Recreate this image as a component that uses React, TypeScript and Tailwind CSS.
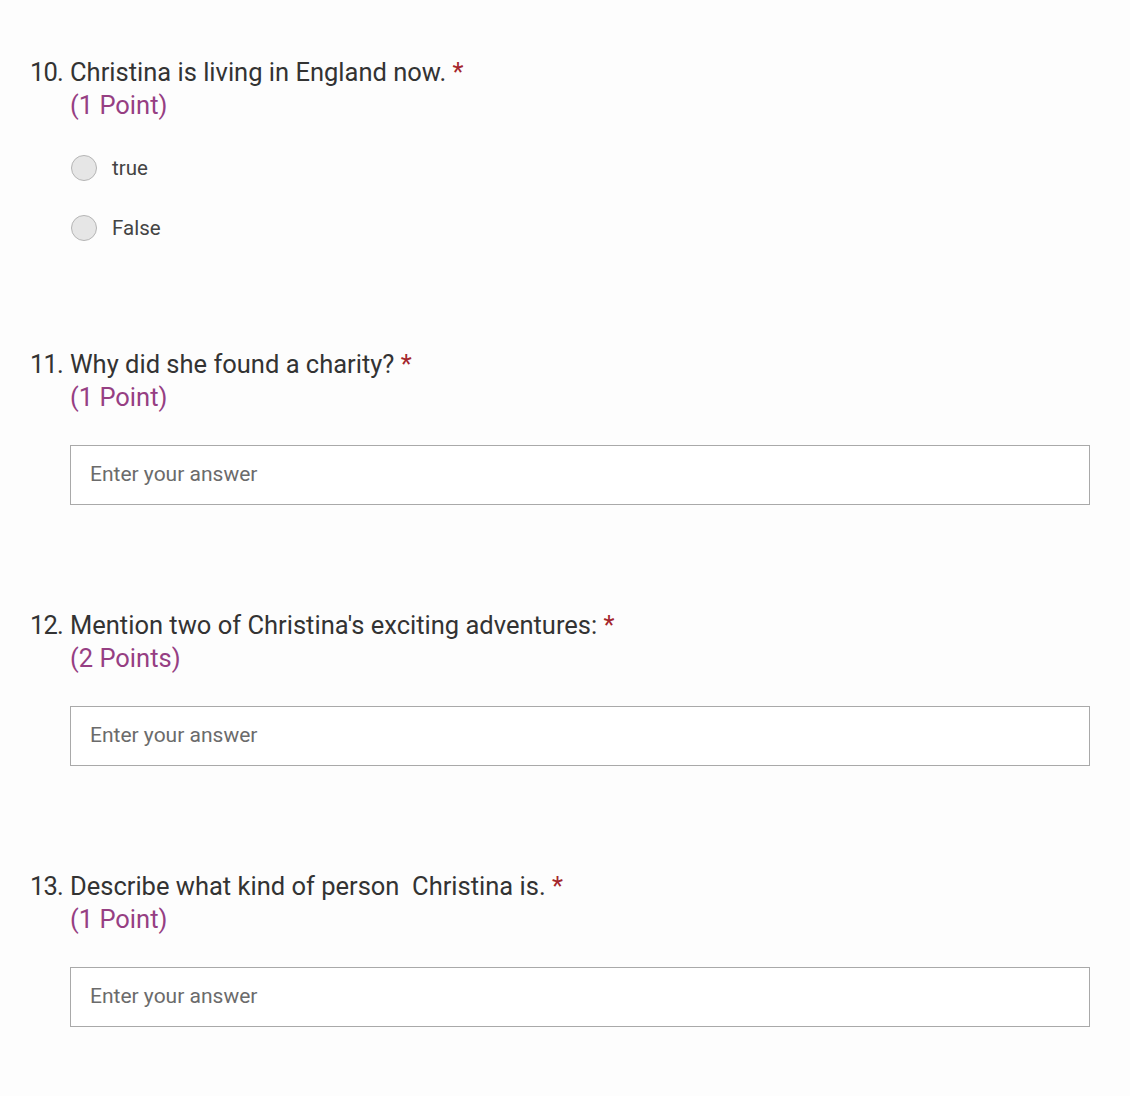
import React from "react";

type Question = {
  num: string;
  title: string;
  points: string;
  kind: "radio" | "text";
  options?: string[];
};

const questions: Question[] = [
  { num: "10.", title: "Christina is living in England now.", points: "(1 Point)", kind: "radio", options: ["true", "False"] },
  { num: "11.", title: "Why did she found a charity?", points: "(1 Point)", kind: "text" },
  { num: "12.", title: "Mention two of Christina's exciting adventures:", points: "(2 Points)", kind: "text" },
  { num: "13.", title: "Describe what kind of person\u00a0 Christina is.", points: "(1 Point)", kind: "text" },
];

function QuestionBlock({ q }: { q: Question }) {
  return (
    <div className="flex flex-col">
      <div className="flex text-[25.5px] leading-[32px] text-[#333333]">
        <span className="w-[40px] shrink-0 tracking-[-0.8px]">{q.num}</span>
        <span>
          {q.title} <span className="text-[#a4262c]">*</span>
        </span>
      </div>
      <div className="pl-[40px] text-[25.5px] leading-[34px] text-[#963f83]">{q.points}</div>
      {q.kind === "radio" ? (
        <div className="mt-[26px] flex flex-col gap-[20px] pl-[41px]">
          {q.options!.map((o) => (
            <label key={o} className="flex h-[40px] items-center gap-[15px]">
              <span className="h-[26px] w-[26px] rounded-full border border-[#b5b5b5] bg-[#e6e6e6]" />
              <span className="text-[20.5px] text-[#444444]">{o}</span>
            </label>
          ))}
        </div>
      ) : (
        <div className="mt-[31px] ml-[40px] mr-[10px] flex h-[60px] items-center border border-[#a9a9a9] bg-white px-[19px]">
          <span className="text-[21px] text-[#6b6b6b]">Enter your answer</span>
        </div>
      )}
    </div>
  );
}

export default function App() {
  return (
    <div
      className="min-h-[1096px] w-[1130px] bg-[#fdfdfd] px-[30px] pt-[56px]"
      style={{ fontFamily: "Roboto, 'Noto Sans', sans-serif" }}
    >
      <div className="flex flex-col gap-[100px]">
        <QuestionBlock q={questions[0]} />
        <div className="flex flex-col gap-[104px]">
          {questions.slice(1).map((q) => (
            <QuestionBlock key={q.num} q={q} />
          ))}
        </div>
      </div>
    </div>
  );
}
